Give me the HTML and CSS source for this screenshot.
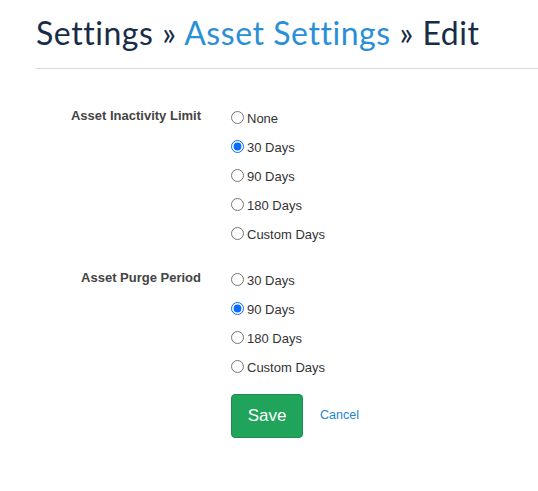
FILE: index.html
```html
<!DOCTYPE html>
<html>
<head>
<meta charset="utf-8">
<link rel="stylesheet" href="styles.css">
</head>
<body>
<div class="page">
  <h1 class="title">Settings » <a class="crumb" href="#">Asset Settings</a> » Edit</h1>
  <hr class="rule">
  <form class="form">
    <div class="field">
      <div class="field-label">Asset Inactivity Limit</div>
      <div class="options">
        <label class="option"><input type="radio" name="inactivity"><span>None</span></label>
        <label class="option"><input type="radio" name="inactivity" checked><span>30 Days</span></label>
        <label class="option"><input type="radio" name="inactivity"><span>90 Days</span></label>
        <label class="option"><input type="radio" name="inactivity"><span>180 Days</span></label>
        <label class="option"><input type="radio" name="inactivity"><span>Custom Days</span></label>
      </div>
    </div>
    <div class="field">
      <div class="field-label">Asset Purge Period</div>
      <div class="options">
        <label class="option"><input type="radio" name="purge"><span>30 Days</span></label>
        <label class="option"><input type="radio" name="purge" checked><span>90 Days</span></label>
        <label class="option"><input type="radio" name="purge"><span>180 Days</span></label>
        <label class="option"><input type="radio" name="purge"><span>Custom Days</span></label>
      </div>
    </div>
    <div class="actions">
      <button type="button" class="btn-save">Save</button>
      <a href="#" class="cancel">Cancel</a>
    </div>
  </form>
</div>
</body>
</html>
```

FILE: styles.css
```css
html, body {
  margin: 0;
  padding: 0;
  background: #ffffff;
}
.page {
  padding-left: 36px;
}
.title {
  margin: 0;
  padding-top: 13px;
  font-family: Lato, "Open Sans", sans-serif;
  font-weight: 400;
  font-size: 32px;
  line-height: 40px;
  letter-spacing: 0.55px;
  color: #182c48;
}
.crumb {
  color: #2a8fd8;
  text-decoration: none;
}
.rule {
  margin: 15px 0 0 -1px;
  border: 0;
  border-top: 1px solid #dcdcdf;
  height: 0;
}
.form {
  padding-top: 34px;
  font-family: "Liberation Sans", Arial, sans-serif;
}
.field {
  display: flex;
  margin-bottom: 17px;
}
.field-label {
  width: 165px;
  text-align: right;
  font-weight: 700;
  font-size: 13px;
  line-height: 20px;
  padding-top: 3px;
  color: #444;
}
.options {
  display: flex;
  flex-direction: column;
  margin-left: 30px;
}
.option {
  display: flex;
  align-items: center;
  height: 29px;
  font-size: 13px;
  color: #333;
}
.option input {
  margin: 0 3px 0 0;
  width: 13px;
  height: 13px;
  accent-color: #0a6cff;
}
.option span {
  padding-top: 2px;
}
.actions {
  display: flex;
  align-items: center;
  margin-left: 195px;
  margin-top: -4px;
}
.btn-save {
  width: 72px;
  height: 44px;
  background: #20a35a;
  border: 1px solid #1a8f4d;
  border-radius: 4px;
  color: #ffffff;
  font-family: "Liberation Sans", Arial, sans-serif;
  font-size: 17px;
  padding: 0;
}
.cancel {
  margin-left: 17px;
  font-size: 12.5px;
  color: #1a86d6;
  text-decoration: none;
  padding-bottom: 2px;
}
```
